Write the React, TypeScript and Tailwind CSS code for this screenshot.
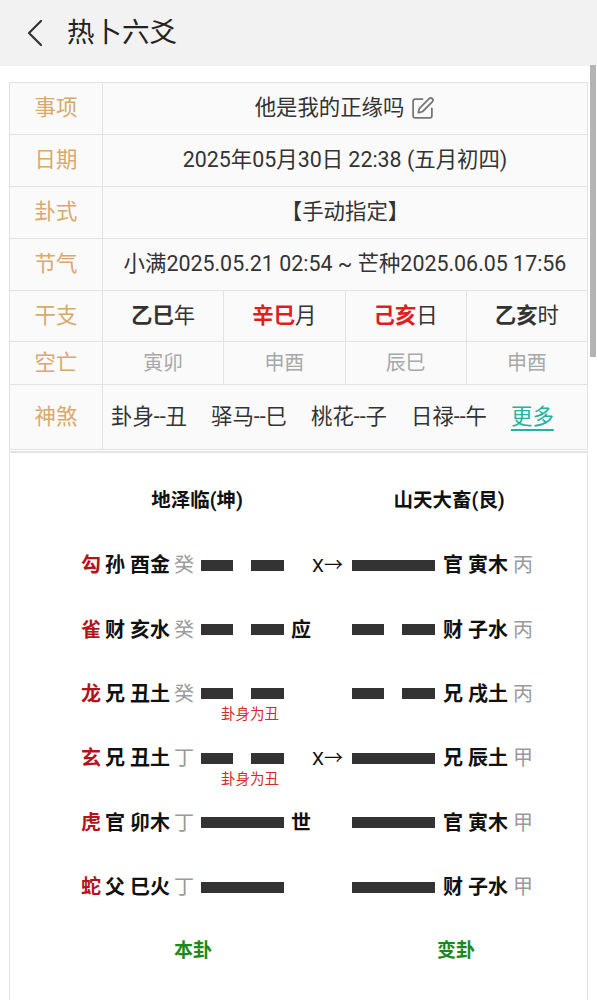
import React from "react";

const FONT = "font-['Roboto','Noto_Sans_CJK_SC',sans-serif]";

type Yao = {
  god: string;
  qin: string;
  zhi: string;
  gan: string;
  yang: boolean;
  mark?: string;
  moving?: boolean;
  note?: string;
  r: { yang: boolean; qin: string; zhi: string; gan: string };
};

const yaos: Yao[] = [
  { god: "勾", qin: "孙", zhi: "酉金", gan: "癸", yang: false, moving: true, r: { yang: true, qin: "官", zhi: "寅木", gan: "丙" } },
  { god: "雀", qin: "财", zhi: "亥水", gan: "癸", yang: false, mark: "应", r: { yang: false, qin: "财", zhi: "子水", gan: "丙" } },
  { god: "龙", qin: "兄", zhi: "丑土", gan: "癸", yang: false, note: "卦身为丑", r: { yang: false, qin: "兄", zhi: "戌土", gan: "丙" } },
  { god: "玄", qin: "兄", zhi: "丑土", gan: "丁", yang: false, moving: true, note: "卦身为丑", r: { yang: true, qin: "兄", zhi: "辰土", gan: "甲" } },
  { god: "虎", qin: "官", zhi: "卯木", gan: "丁", yang: true, mark: "世", r: { yang: true, qin: "官", zhi: "寅木", gan: "甲" } },
  { god: "蛇", qin: "父", zhi: "巳火", gan: "丁", yang: true, r: { yang: true, qin: "财", zhi: "子水", gan: "甲" } },
];

function Line({ yang, note }: { yang: boolean; note?: string }) {
  return (
    <div className="relative w-[83px] h-[11px] flex justify-between">
      {yang ? (
        <div className="w-full h-full bg-[#333]" />
      ) : (
        <>
          <div className="w-[32px] h-full bg-[#333]" />
          <div className="w-[33px] h-full bg-[#333]" />
        </>
      )}
      {note && (
        <div className="absolute left-[20px] top-[20px] text-[14.5px] leading-none text-[#d42a2a] whitespace-nowrap">
          {note}
        </div>
      )}
    </div>
  );
}

function InfoRow({ label, children, h }: { label: string; children: React.ReactNode; h: string }) {
  return (
    <div className={`grid grid-cols-[93px_1fr] ${h}`}>
      <div className="flex items-center justify-center border-r border-b border-[#e2e2e2] text-[#d8a96d]">{label}</div>
      <div className="border-r border-b border-[#e2e2e2] flex items-center">{children}</div>
    </div>
  );
}

export default function App() {
  return (
    <div className={`relative min-h-screen bg-white text-[#333] ${FONT}`}>
      <div className="h-[66px] bg-[#f2f2f2] flex items-center pl-[26px]">
        <svg width="18" height="28" viewBox="0 0 18 28" fill="none" stroke="#333" strokeWidth="2.2" strokeLinecap="round" strokeLinejoin="round">
          <path d="M15 2 L3 14 L15 26" />
        </svg>
        <span className="ml-[23px] text-[27.5px] text-[#222]">热卜六爻</span>
      </div>

      <div className="mx-[9px] mt-[16px]">
        <div className="border-t border-l border-[#e2e2e2] bg-[#fafafa] text-[21.4px]">
          <InfoRow label="事项" h="h-[52px]">
            <div className="w-full flex items-center justify-center gap-[6px]">
              <span>他是我的正缘吗</span>
              <svg width="25" height="25" viewBox="0 0 24 24" fill="none" stroke="#777" strokeWidth="1.7" strokeLinecap="round" strokeLinejoin="round">
                <path d="M12 3H5a2 2 0 0 0-2 2v14a2 2 0 0 0 2 2h14a2 2 0 0 0 2-2v-7" />
                <path d="M18.375 2.625a1 1 0 0 1 3 3l-9.013 9.014a2 2 0 0 1-.853.505l-2.873.84a.5.5 0 0 1-.62-.62l.84-2.873a2 2 0 0 1 .506-.852z" />
              </svg>
            </div>
          </InfoRow>
          <InfoRow label="日期" h="h-[52px]">
            <div className="w-full text-center">2025年05月30日 22:38 (五月初四)</div>
          </InfoRow>
          <InfoRow label="卦式" h="h-[52px]">
            <div className="w-full text-center">【手动指定】</div>
          </InfoRow>
          <InfoRow label="节气" h="h-[52px]">
            <div className="w-full text-center">小满2025.05.21 02:54 ~ 芒种2025.06.05 17:56</div>
          </InfoRow>
          <div className="grid grid-cols-[93px_1fr] h-[51px]">
            <div className="flex items-center justify-center border-r border-b border-[#e2e2e2] text-[#d8a96d]">干支</div>
            <div className="grid grid-cols-4">
              <div className="flex items-center justify-center border-r border-b border-[#e2e2e2]"><b className="font-bold">乙巳</b>年</div>
              <div className="flex items-center justify-center border-r border-b border-[#e2e2e2]"><b className="font-bold text-[#e01e1e]">辛巳</b>月</div>
              <div className="flex items-center justify-center border-r border-b border-[#e2e2e2]"><b className="font-bold text-[#e01e1e]">己亥</b>日</div>
              <div className="flex items-center justify-center border-r border-b border-[#e2e2e2]"><b className="font-bold">乙亥</b>时</div>
            </div>
          </div>
          <div className="grid grid-cols-[93px_1fr] h-[43px]">
            <div className="flex items-center justify-center border-r border-b border-[#e2e2e2] text-[#d8a96d]">空亡</div>
            <div className="grid grid-cols-4 text-[20px] text-[#a8a8a8]">
              <div className="flex items-center justify-center border-r border-b border-[#e2e2e2]">寅卯</div>
              <div className="flex items-center justify-center border-r border-b border-[#e2e2e2]">申酉</div>
              <div className="flex items-center justify-center border-r border-b border-[#e2e2e2]">辰巳</div>
              <div className="flex items-center justify-center border-r border-b border-[#e2e2e2]">申酉</div>
            </div>
          </div>
          <InfoRow label="神煞" h="h-[65px]">
            <div className="flex items-center gap-[24px] pl-[8px]">
              <span>卦身--丑</span>
              <span>驿马--巳</span>
              <span>桃花--子</span>
              <span>日禄--午</span>
              <span className="text-[#22b3a3] underline underline-offset-[5px]">更多</span>
            </div>
          </InfoRow>
        </div>

        <div className="mt-[1px] border-t-2 border-l border-r border-[#e4e4e4] bg-white pt-[16px] pl-[71px] pb-[40px]">
          <div className="flex items-center h-[64px] text-[19.5px] font-bold text-[#111]">
            <div className="w-[232px] text-center">地泽临(坤)</div>
            <div className="ml-[56px] w-[160px] text-center">山天大畜(艮)</div>
          </div>

          {yaos.map((y, i) => (
            <div key={i} className="flex items-center h-[64.4px] text-[20px] leading-none">
              <span className="w-[24px] font-bold text-[#b3141b]">{y.god}</span>
              <span className="w-[25px] font-bold text-[#111]">{y.qin}</span>
              <span className="w-[44px] font-bold text-[#111]">{y.zhi}</span>
              <span className="w-[27px] text-[#9a9a9a]">{y.gan}</span>
              <Line yang={y.yang} note={y.note} />
              <div className="w-[68px] flex items-center">
                {y.mark && <span className="pl-[7px] font-bold text-[#111]">{y.mark}</span>}
                {y.moving && <span className="ml-auto pr-[9px] text-[19px] text-[#111]">X→</span>}
              </div>
              <Line yang={y.r.yang} />
              <span className="ml-[8px] w-[25px] font-bold text-[#111]">{y.r.qin}</span>
              <span className="w-[45px] font-bold text-[#111]">{y.r.zhi}</span>
              <span className="text-[#9a9a9a]">{y.r.gan}</span>
            </div>
          ))}

          <div className="flex items-center h-[64px] text-[19px] font-bold text-[#1a8a1a]">
            <div className="w-[224px] text-center">本卦</div>
            <div className="ml-[71px] w-[160px] text-center">变卦</div>
          </div>
        </div>
      </div>

      <div className="absolute right-[1px] top-[65px] w-[6px] h-[292px] bg-[#b4b4b4]" />
    </div>
  );
}
